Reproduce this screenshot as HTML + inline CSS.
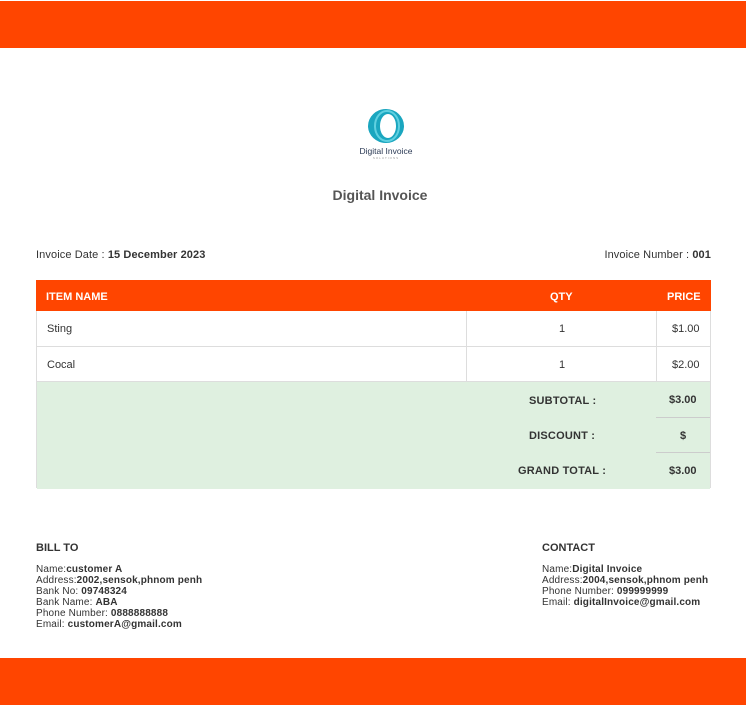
<!DOCTYPE html>
<html><head><style>
body{margin:0;width:746px;height:710px;position:relative;background:#fff;font-family:"Liberation Sans",Arial,sans-serif;color:#333;overflow:hidden}
.a{position:absolute}
.bar{left:0;width:746px;height:47px;background:#ff4500}
.t{font-size:11px;white-space:nowrap}
b{font-weight:bold}
</style></head><body>
<div class="a bar" style="top:1px"></div>
<div class="a bar" style="top:658px"></div>
<svg class="a" style="left:357px;top:106px" width="58" height="54" viewBox="0 0 58 54">
<ellipse cx="29" cy="20" rx="18" ry="17" fill="#1aa6bf"/>
<ellipse cx="31" cy="20" rx="8" ry="12" fill="#fff"/>
<ellipse cx="30" cy="20" rx="12" ry="15" fill="none" stroke="#5fd0e0" stroke-width="2"/>
<text x="29" y="48" font-size="8.5" text-anchor="middle" fill="#2b3a55" font-family="Liberation Sans">Digital Invoice</text>
<text x="29" y="53" font-size="3" text-anchor="middle" fill="#999" letter-spacing="1">SOLUTIONS</text>
</svg>
<div class="a" style="left:0;width:760px;top:187px;text-align:center;font-size:14px;font-weight:bold;color:#555">Digital Invoice</div>
<div class="a t" style="left:36px;top:249px;letter-spacing:0.1px">Invoice Date : <b>15 December 2023</b></div>
<div class="a t" style="right:35px;top:249px;letter-spacing:0.1px">Invoice Number : <b>001</b></div>
<div class="a" style="left:36px;top:280px;width:675px;height:31px;background:#ff4500"></div>
<div class="a t" style="left:46px;top:291px;color:#fff;font-weight:bold">ITEM NAME</div>
<div class="a t" style="left:550px;top:291px;color:#fff;font-weight:bold">QTY</div>
<div class="a t" style="left:667px;top:291px;color:#fff;font-weight:bold">PRICE</div>
<div class="a" style="left:36px;top:311px;width:673px;height:176px;border:1px solid #ddd;border-top:none"></div>
<div class="a" style="left:36px;top:346px;width:675px;height:1px;background:#ddd"></div>
<div class="a" style="left:466px;top:311px;width:1px;height:70px;background:#ddd"></div>
<div class="a" style="left:656px;top:311px;width:1px;height:70px;background:#ddd"></div>
<div class="a" style="left:37px;top:381px;width:673px;height:107px;background:#dff0e0;border-top:1px solid #ddd"></div>
<div class="a" style="left:656px;top:417px;width:54px;height:1px;background:#ccc"></div>
<div class="a" style="left:656px;top:452px;width:54px;height:1px;background:#ccc"></div>
<div class="a t" style="left:47px;top:323px">Sting</div>
<div class="a t" style="left:559px;top:323px">1</div>
<div class="a t" style="left:672px;top:323px">$1.00</div>
<div class="a t" style="left:47px;top:359px">Cocal</div>
<div class="a t" style="left:559px;top:359px">1</div>
<div class="a t" style="left:672px;top:359px">$2.00</div>
<div class="a t" style="left:529px;top:395px;font-weight:bold;letter-spacing:0.2px">SUBTOTAL :</div>
<div class="a t" style="left:669px;top:394px;font-weight:bold">$3.00</div>
<div class="a t" style="left:529px;top:430px;font-weight:bold;letter-spacing:0.2px">DISCOUNT :</div>
<div class="a t" style="left:680px;top:430px;font-weight:bold">$</div>
<div class="a t" style="left:518px;top:465px;font-weight:bold;letter-spacing:0.2px">GRAND TOTAL :</div>
<div class="a t" style="left:669px;top:465px;font-weight:bold">$3.00</div>
<div class="a t" style="left:36px;top:542px;font-weight:bold">BILL TO</div>
<div class="a" style="left:36px;top:564px;font-size:10px;line-height:11px;letter-spacing:0.15px">Name:<b>customer A</b><br>Address:<b>2002,sensok,phnom penh</b><br>Bank No: <b>09748324</b><br>Bank Name: <b>ABA</b><br>Phone Number: <b>0888888888</b><br>Email: <b>customerA@gmail.com</b></div>
<div class="a t" style="left:542px;top:542px;font-weight:bold">CONTACT</div>
<div class="a" style="left:542px;top:564px;font-size:10px;line-height:11px;letter-spacing:0.15px">Name:<b>Digital Invoice</b><br>Address:<b>2004,sensok,phnom penh</b><br>Phone Number: <b>099999999</b><br>Email: <b>digitalInvoice@gmail.com</b></div>
</body></html>
